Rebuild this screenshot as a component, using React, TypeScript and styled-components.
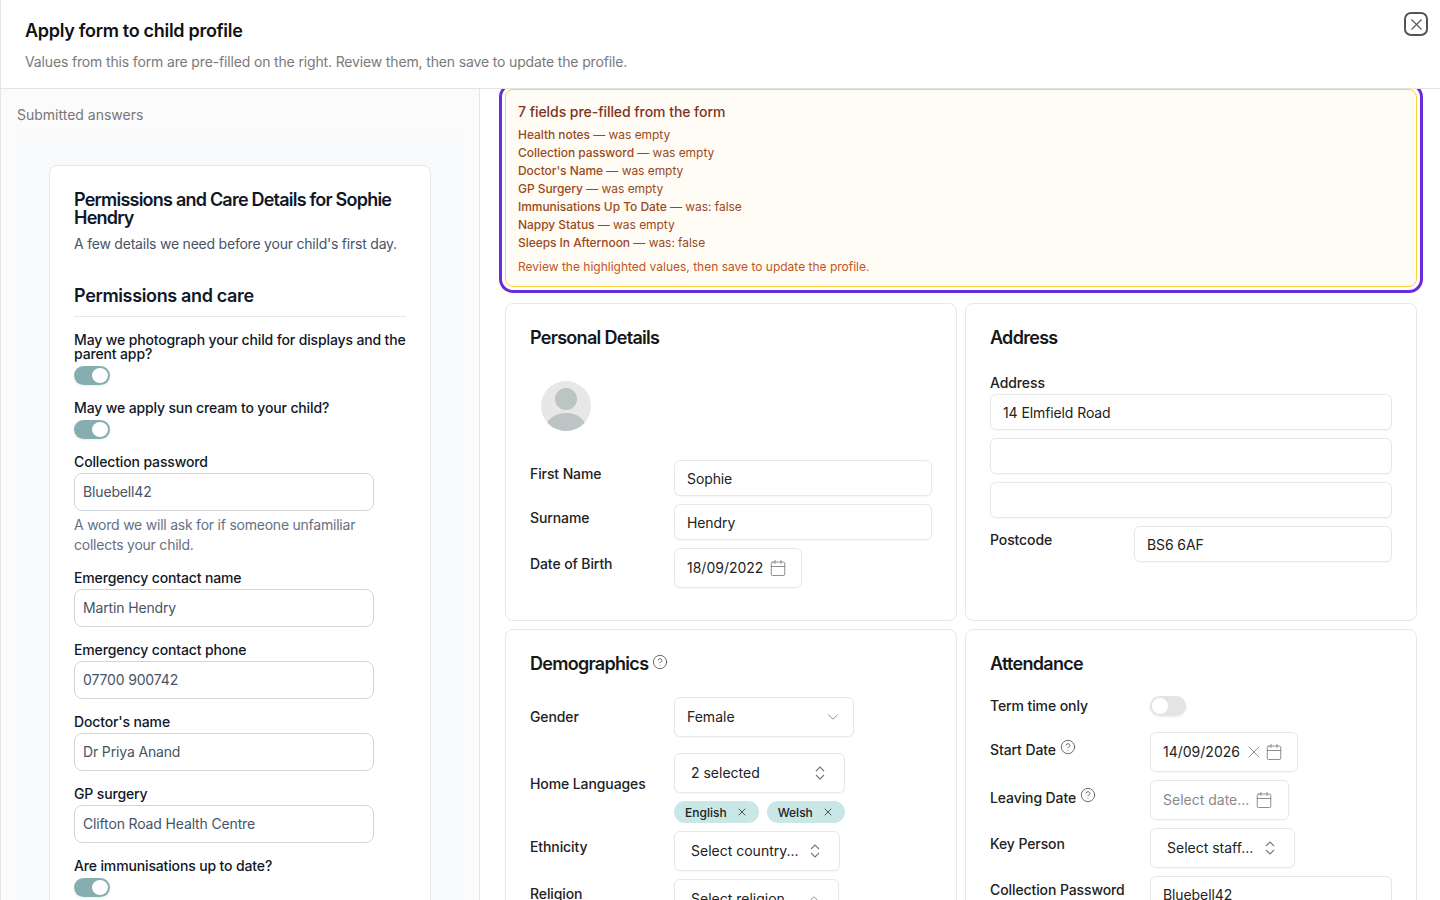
import { FC, ReactNode } from 'react'
import styled, { createGlobalStyle } from 'styled-components'
import { Calendar, ChevronDown, ChevronUp, CircleHelp, X } from 'lucide-react'

const GlobalStyle = createGlobalStyle`
    html, body {
        margin: 0;
        height: 100%;
        overflow: hidden;
        background: white;
        font-family: Inter, "Liberation Sans", sans-serif;
    }
    * {
        box-sizing: border-box;
    }
`;

const Modal = styled.div`
    display: flex;
    flex-direction: column;
    height: 900px;
    overflow: hidden;
    border-left: 1px solid #e5e5e5;
`;

const Header = styled.header`
    position: relative;
    flex: none;
    height: 89px;
    padding: 20px 24px 0;
    border-bottom: 1px solid #e2e3e5;
`;

const Title = styled.h1`
    margin: 0;
    font-size: 18px;
    line-height: 22px;
    font-weight: 600;
    letter-spacing: -0.3px;
    color: #111;
`;

const Subtitle = styled.p`
    margin: 10px 0 0;
    font-size: 14px;
    line-height: 20px;
    letter-spacing: -0.15px;
    color: #7a7a7a;
`;

const CloseButton = styled.button`
    position: absolute;
    top: 12px;
    right: 12px;
    display: flex;
    align-items: center;
    justify-content: center;
    width: 24px;
    height: 24px;
    padding: 0;
    color: #555;
    background: white;
    border: 2px solid #555;
    border-radius: 7px;
`;

const Body = styled.div`
    display: flex;
    flex: 1;
    min-height: 0;
`;

const LeftPane = styled.aside`
    flex: none;
    width: 479px;
    padding: 16px 16px 0;
    overflow: hidden;
    background: #fbfbfc;
    border-right: 1px solid #e5e5e5;
`;

const PaneLabel = styled.div`
    font-size: 14px;
    line-height: 20px;
    color: #777;
`;

const FormBackdrop = styled.div`
    margin-top: 8px;
    padding: 32px;
    background: #f9fafb;
`;

const FormCard = styled.div`
    padding: 24px;
    background: white;
    border: 1px solid #e4e7ec;
    border-radius: 8px;
`;

const FormTitle = styled.h2`
    margin: 1px 0 0;
    font-size: 18px;
    line-height: 18px;
    font-weight: 600;
    letter-spacing: -0.78px;
    color: #101828;
`;

const FormIntro = styled.p`
    margin: 7px 0 0;
    font-size: 14px;
    line-height: 20px;
    letter-spacing: -0.22px;
    color: #475467;
`;

const SectionHeading = styled.h3`
    margin: 31px 0 0;
    padding-bottom: 9px;
    font-size: 18px;
    line-height: 22px;
    font-weight: 600;
    letter-spacing: -0.35px;
    color: #101828;
    border-bottom: 1px solid #e4e7ec;
`;

const Question = styled.div`
    display: flex;
    flex-direction: column;
    align-items: flex-start;
    margin-top: 16px;
`;

const QuestionLabel = styled.label`
    font-size: 14px;
    line-height: 14px;
    font-weight: 450;
    letter-spacing: -0.14px;
    color: #101828;
`;

const QuestionInput = styled.div`
    width: 300px;
    height: 38px;
    margin-top: 4px;
    padding: 0 8px;
    font-size: 14px;
    line-height: 36px;
    letter-spacing: -0.15px;
    color: #475467;
    background: white;
    border: 1px solid #d0d5dd;
    border-radius: 8px;
`;

const HelpText = styled.p`
    width: 300px;
    margin: 4px 0 0;
    font-size: 14px;
    line-height: 20px;
    letter-spacing: -0.23px;
    color: #667085;
`;

const Toggle = styled.span<{ $on?: boolean; $small?: boolean }>`
    position: relative;
    display: block;
    width: 36px;
    height: ${p => (p.$small ? '20px' : '19px')};
    margin-top: ${p => (p.$small ? '0' : '5px')};
    background: ${p => (p.$on ? '#86aeb0' : '#e4e4e4')};
    border-radius: 10px;
    box-shadow: 0 1px 3px rgba(0, 0, 0, 0.08);

    &::after {
        content: '';
        position: absolute;
        top: 2px;
        left: ${p => (p.$on ? '18px' : '2px')};
        width: 16px;
        height: ${p => (p.$small ? '16px' : '15px')};
        background: white;
        border-radius: 50%;
    }
`;

const RightPane = styled.main`
    flex: 1;
    min-width: 0;
    padding: 0 23px 0 25px;
    overflow: hidden;
`;

const Banner = styled.section`
    height: 198px;
    padding: 12px 12px 0;
    background: #fffcf5;
    border: 1px solid #fdd23e;
    border-radius: 8px;
    outline: 3px solid #6a2bdd;
    outline-offset: 3px;
`;

const BannerTitle = styled.div`
    font-size: 14px;
    line-height: 20px;
    font-weight: 500;
    letter-spacing: -0.05px;
    color: #7b341e;
`;

const BannerList = styled.ul`
    margin: 4px 0 0;
    padding: 0;
    list-style: none;
`;

const BannerItem = styled.li`
    font-size: 12px;
    line-height: 18px;
    letter-spacing: -0.05px;
    color: #9a4a1c;

    & b {
        font-weight: 450;
    }
`;

const BannerNote = styled.div`
    margin-top: 6px;
    font-size: 12px;
    line-height: 18px;
    color: #c05621;
`;

const Grid = styled.div`
    display: grid;
    grid-template-columns: 452px 452px;
    gap: 8px;
    margin-top: 16px;
`;

const Card = styled.section`
    padding: 24px 24px 32px;
    background: white;
    border: 1px solid #e8e8e8;
    border-radius: 8px;
`;

const CardTitle = styled.h2<{ $gap: number }>`
    display: flex;
    gap: 4px;
    margin: 0 0 ${p => p.$gap}px;
    font-size: 18px;
    line-height: 20px;
    font-weight: 600;
    letter-spacing: -0.7px;
    color: #171717;

    & svg {
        margin-top: 0;
        color: #555;
    }
`;

const Avatar = styled.svg`
    display: block;
    margin: 0 0 29px 11px;
`;

const Rows = styled.div`
    display: flex;
    flex-direction: column;
    gap: 8px;
`;

const Row = styled.div<{ $label?: number; $after?: number }>`
    display: grid;
    grid-template-columns: ${p => p.$label || 144}px 1fr;
    align-items: start;
    margin-bottom: ${p => p.$after || 0}px;
`;

const Label = styled.label<{ $pad: number }>`
    display: flex;
    gap: 4px;
    padding-top: ${p => p.$pad}px;
    font-size: 14px;
    line-height: 20px;
    font-weight: 450;
    letter-spacing: -0.1px;
    color: #222;

    & svg {
        margin-top: -1px;
        color: #555;
    }
`;

const TextBox = styled.div`
    height: 36px;
    padding: 0 12px;
    font-size: 14px;
    line-height: 36px;
    letter-spacing: -0.1px;
    color: #222;
    background: white;
    border: 1px solid #e8e8e8;
    border-radius: 6px;
    box-shadow: 0 1px 2px rgba(0, 0, 0, 0.04);
`;

const AddressLabel = styled.div`
    margin-bottom: 1px;
    font-size: 14px;
    line-height: 20px;
    font-weight: 450;
    letter-spacing: -0.1px;
    color: #222;
`;

const Control = styled.div<{ $width: number; $left?: number; $right?: number; $muted?: boolean }>`
    display: flex;
    align-items: center;
    justify-content: space-between;
    width: ${p => p.$width}px;
    height: 40px;
    padding: 0 ${p => p.$right ?? 19}px 1px ${p => p.$left ?? 16}px;
    font-size: 14px;
    color: ${p => (p.$muted ? '#8a8a8a' : '#222')};
    background: white;
    border: 1px solid #e8e8e8;
    border-radius: 6px;
    box-shadow: 0 1px 2px rgba(0, 0, 0, 0.04);

    & svg {
        flex: none;
        color: #777;
    }
`;

const IconGroup = styled.span`
    display: flex;
    align-items: center;
    gap: 1px;
`;

const Chips = styled.div`
    display: flex;
    gap: 8px;
    margin-top: 8px;
`;

const Chip = styled.span`
    display: flex;
    align-items: center;
    justify-content: space-between;
    height: 22px;
    padding: 0 11px;
    font-size: 12px;
    font-weight: 500;
    color: #222;
    background: #c8e7e6;
    border-radius: 11px;

    & svg {
        margin-left: 9px;
    }
`;

const QuestionField: FC<{ label: string; children: ReactNode }> = ({ label, children }) => (
    <Question>
        <QuestionLabel>{label}</QuestionLabel>
        {children}
    </Question>
);

const changes = [
    ['Health notes', 'was empty'],
    ['Collection password', 'was empty'],
    ["Doctor's Name", 'was empty'],
    ['GP Surgery', 'was empty'],
    ['Immunisations Up To Date', 'was: false'],
    ['Nappy Status', 'was empty'],
    ['Sleeps In Afternoon', 'was: false'],
];

const Help = () => <CircleHelp size={16} strokeWidth={1.3} />;
const DateIcon = () => <Calendar size={18} strokeWidth={1.1} />;

const UpDown = () => (
    <svg width="10" height="14" viewBox="0 0 10 14" fill="none" stroke="currentColor" strokeWidth="1.1">
        <path d="M1 5 L5 1 L9 5" />
        <path d="M1 9 L5 13 L9 9" />
    </svg>
);

const App: FC = () => {
    return (
        <Modal>
            <GlobalStyle />
            <Header>
                <Title>Apply form to child profile</Title>
                <Subtitle>Values from this form are pre-filled on the right. Review them, then save to update the profile.</Subtitle>
                <CloseButton aria-label="Close"><X size={19} strokeWidth={1.4} /></CloseButton>
            </Header>
            <Body>
                <LeftPane>
                    <PaneLabel>Submitted answers</PaneLabel>
                    <FormBackdrop>
                        <FormCard>
                            <FormTitle>Permissions and Care Details for Sophie Hendry</FormTitle>
                            <FormIntro>A few details we need before your child's first day.</FormIntro>
                            <SectionHeading>Permissions and care</SectionHeading>
                            <QuestionField label="May we photograph your child for displays and the parent app?"><Toggle $on /></QuestionField>
                            <QuestionField label="May we apply sun cream to your child?"><Toggle $on /></QuestionField>
                            <QuestionField label="Collection password">
                                <QuestionInput>Bluebell42</QuestionInput>
                                <HelpText>A word we will ask for if someone unfamiliar collects your child.</HelpText>
                            </QuestionField>
                            <QuestionField label="Emergency contact name"><QuestionInput>Martin Hendry</QuestionInput></QuestionField>
                            <QuestionField label="Emergency contact phone"><QuestionInput>07700 900742</QuestionInput></QuestionField>
                            <QuestionField label="Doctor's name"><QuestionInput>Dr Priya Anand</QuestionInput></QuestionField>
                            <QuestionField label="GP surgery"><QuestionInput>Clifton Road Health Centre</QuestionInput></QuestionField>
                            <QuestionField label="Are immunisations up to date?"><Toggle $on /></QuestionField>
                        </FormCard>
                    </FormBackdrop>
                </LeftPane>
                <RightPane>
                    <Banner>
                        <BannerTitle>7 fields pre-filled from the form</BannerTitle>
                        <BannerList>
                            {changes.map(([field, was]) => (
                                <BannerItem key={field}><b>{field}</b> — {was}</BannerItem>
                            ))}
                        </BannerList>
                        <BannerNote>Review the highlighted values, then save to update the profile.</BannerNote>
                    </Banner>
                    <Grid>
                        <Card>
                            <CardTitle $gap={33}>Personal Details</CardTitle>
                            <Avatar width="50" height="50" viewBox="0 0 50 50">
                                <defs>
                                    <clipPath id="avatarClip"><circle cx="25" cy="25" r="25" /></clipPath>
                                </defs>
                                <circle cx="25" cy="25" r="25" fill="#e7e7e7" />
                                <g clipPath="url(#avatarClip)" fill="#bcc4c4">
                                    <circle cx="25" cy="18" r="11" />
                                    <ellipse cx="25" cy="49" rx="21" ry="17" />
                                </g>
                            </Avatar>
                            <Rows>
                                <Row>
                                    <Label $pad={4}>First Name</Label>
                                    <TextBox>Sophie</TextBox>
                                </Row>
                                <Row>
                                    <Label $pad={4}>Surname</Label>
                                    <TextBox>Hendry</TextBox>
                                </Row>
                                <Row>
                                    <Label $pad={6}>Date of Birth</Label>
                                    <Control $width={128} $left={12} $right={14}>18/09/2022<DateIcon /></Control>
                                </Row>
                            </Rows>
                        </Card>
                        <Card>
                            <CardTitle $gap={25}>Address</CardTitle>
                            <AddressLabel>Address</AddressLabel>
                            <Rows>
                                <TextBox>14 Elmfield Road</TextBox>
                                <TextBox />
                                <TextBox />
                                <Row>
                                    <Label $pad={4}>Postcode</Label>
                                    <TextBox>BS6 6AF</TextBox>
                                </Row>
                            </Rows>
                        </Card>
                        <Card>
                            <CardTitle $gap={23}>Demographics <Help /></CardTitle>
                            <Rows>
                                <Row $after={8}>
                                    <Label $pad={10}>Gender</Label>
                                    <Control $width={180} $left={12} $right={11}>Female<ChevronDown size={18} strokeWidth={1.1} /></Control>
                                </Row>
                                <Row>
                                    <Label $pad={21}>Home Languages</Label>
                                    <div>
                                        <Control $width={171}>2 selected<UpDown /></Control>
                                        <Chips>
                                            <Chip>English<X size={12} strokeWidth={1.5} /></Chip>
                                            <Chip>Welsh<X size={12} strokeWidth={1.5} /></Chip>
                                        </Chips>
                                    </div>
                                </Row>
                                <Row>
                                    <Label $pad={6}>Ethnicity</Label>
                                    <Control $width={166}>Select country...<UpDown /></Control>
                                </Row>
                                <Row>
                                    <Label $pad={5}>Religion</Label>
                                    <Control $width={165} $right={15}>Select religion...<ChevronUp size={18} strokeWidth={1.1} /></Control>
                                </Row>
                            </Rows>
                        </Card>
                        <Card>
                            <CardTitle $gap={22}>Attendance</CardTitle>
                            <Rows>
                                <Row $label={160} $after={8}>
                                    <Label $pad={0}>Term time only</Label>
                                    <Toggle $small />
                                </Row>
                                <Row $label={160}>
                                    <Label $pad={8}>Start Date <Help /></Label>
                                    <Control $width={148} $left={12} $right={14}>
                                        14/09/2026
                                        <IconGroup><X size={20} strokeWidth={1} /><DateIcon /></IconGroup>
                                    </Control>
                                </Row>
                                <Row $label={160}>
                                    <Label $pad={8}>Leaving Date <Help /></Label>
                                    <Control $width={139} $left={12} $right={15} $muted>Select date...<DateIcon /></Control>
                                </Row>
                                <Row $label={160}>
                                    <Label $pad={6}>Key Person</Label>
                                    <Control $width={145}>Select staff...<UpDown /></Control>
                                </Row>
                                <Row $label={160}>
                                    <Label $pad={4}>Collection Password</Label>
                                    <TextBox>Bluebell42</TextBox>
                                </Row>
                            </Rows>
                        </Card>
                    </Grid>
                </RightPane>
            </Body>
        </Modal>
    );
}

export default App;
